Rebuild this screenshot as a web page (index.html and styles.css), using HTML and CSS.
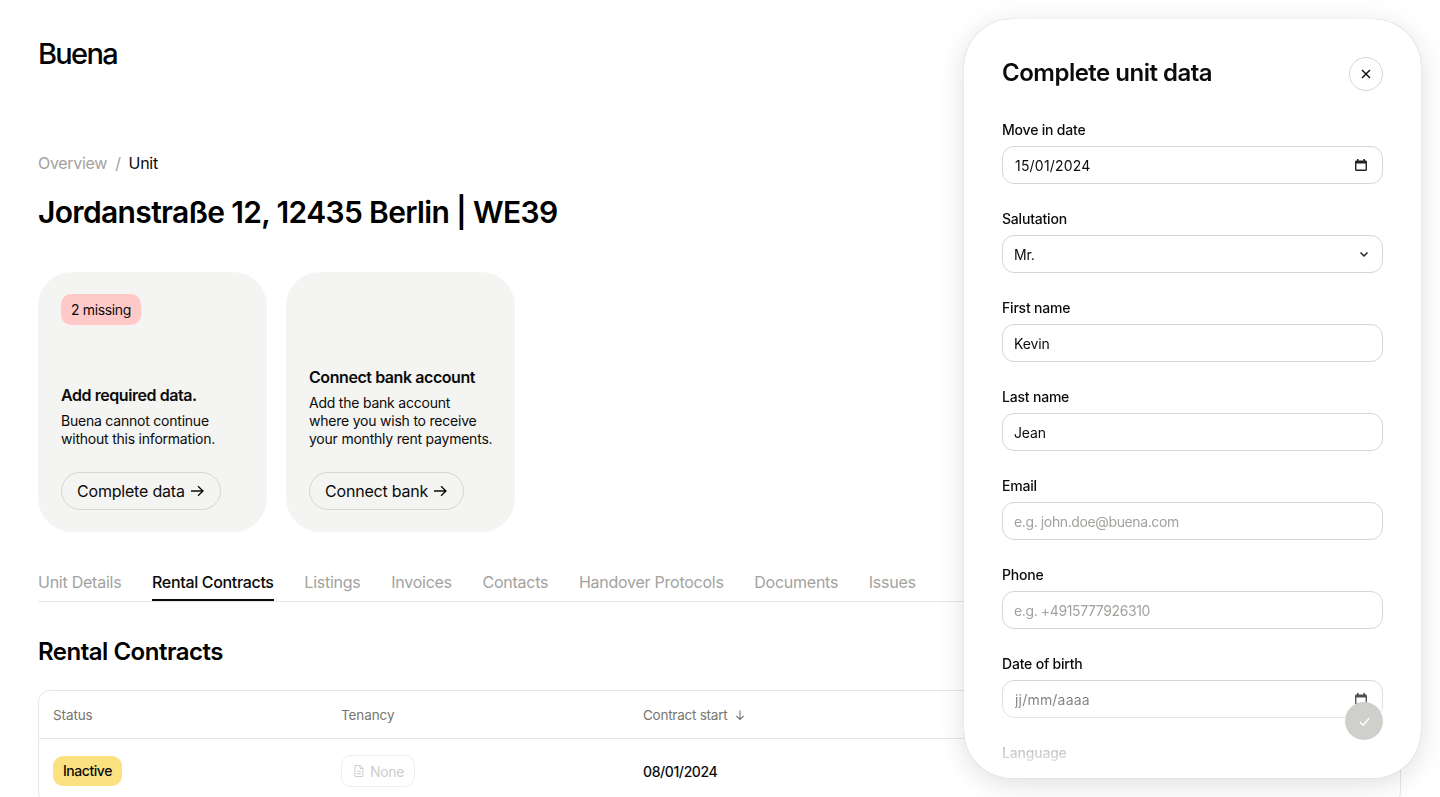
FILE: index.html
```html
<!DOCTYPE html>
<html lang="en">
<head>
    <meta charset="UTF-8">
    <meta name="viewport" content="width=device-width, initial-scale=1.0">
    <title>Buena - Unit</title>
    <link rel="stylesheet" href="styles.css">
</head>
<body>
    <main class="page">
        <div class="logo">Buena</div>

        <nav class="breadcrumb">
            <span class="crumb-link">Overview</span>
            <span class="crumb-sep">/</span>
            <span class="crumb-current">Unit</span>
        </nav>

        <h1 class="page-title">Jordanstraße 12, 12435 Berlin | WE39</h1>

        <section class="cards">
            <article class="card">
                <span class="badge-missing">2 missing</span>
                <h3 class="card-title">Add required data.</h3>
                <p class="card-text">Buena cannot continue<br>without this information.</p>
                <button class="pill-button">Complete data
                    <svg class="arrow" viewBox="0 0 16 16"><path d="M2 8h12M9 3.200 14 8l-5 4.800"/></svg>
                </button>
            </article>
            <article class="card">
                <h3 class="card-title">Connect bank account</h3>
                <p class="card-text">Add the bank account<br>where you wish to receive<br>your monthly rent payments.</p>
                <button class="pill-button">Connect bank
                    <svg class="arrow" viewBox="0 0 16 16"><path d="M2 8h12M9 3.200 14 8l-5 4.800"/></svg>
                </button>
            </article>
        </section>

        <nav class="tabs">
            <a class="tab">Unit Details</a>
            <a class="tab active">Rental Contracts</a>
            <a class="tab">Listings</a>
            <a class="tab">Invoices</a>
            <a class="tab">Contacts</a>
            <a class="tab">Handover Protocols</a>
            <a class="tab">Documents</a>
            <a class="tab">Issues</a>
        </nav>

        <h2 class="section-title">Rental Contracts</h2>

        <div class="table">
            <div class="table-row table-head">
                <div>Status</div>
                <div>Tenancy</div>
                <div class="sort-cell">Contract start
                    <svg class="sort-arrow" viewBox="0 0 12 12"><path d="M6 1.500v9M2.400 7 6 10.500 9.600 7"/></svg>
                </div>
            </div>
            <div class="table-row">
                <div><span class="badge-inactive">Inactive</span></div>
                <div>
                    <span class="chip-none">
                        <svg class="doc-icon" viewBox="0 0 14 14"><path d="M3 1.500h5.200L11 4.300v8.200H3zM8 1.500v3h3M5 7.200h4M5 9.600h4"/></svg>
                        None
                    </span>
                </div>
                <div class="date-cell">08/01/2024</div>
            </div>
        </div>
    </main>

    <aside class="modal">
        <div class="modal-header">
            <h2 class="modal-title">Complete unit data</h2>
            <button class="close-button">
                <svg viewBox="0 0 12 12"><path d="M2 2l8 8M10 2l-8 8"/></svg>
            </button>
        </div>

        <form class="form">
            <label class="field">
                <span class="field-label">Move in date</span>
                <span class="input-wrap">
                    <input class="input input-date" type="text" value="15/01/2024" readonly>
                    <svg class="field-icon" viewBox="0 0 14 14"><path class="cal-fill" d="M3 1h1.600v1.400h4.800V1H11v1.400h.6c.8 0 1.400.6 1.400 1.400v7.800c0 .8-.6 1.400-1.400 1.400H2.400c-.8 0-1.400-.6-1.400-1.400V3.800c0-.8.6-1.400 1.400-1.400H3zM2.400 5.400v6.200h9.200V5.400z"/></svg>
                </span>
            </label>
            <label class="field">
                <span class="field-label">Salutation</span>
                <span class="input-wrap">
                    <input class="input" type="text" value="Mr." readonly>
                    <svg class="field-chevron" viewBox="0 0 10 10"><path d="M1.500 3.500 5 7l3.500-3.500"/></svg>
                </span>
            </label>
            <label class="field">
                <span class="field-label">First name</span>
                <input class="input" type="text" value="Kevin">
            </label>
            <label class="field">
                <span class="field-label">Last name</span>
                <input class="input" type="text" value="Jean">
            </label>
            <label class="field">
                <span class="field-label">Email</span>
                <input class="input" type="text" placeholder="e.g. john.doe@buena.com">
            </label>
            <label class="field">
                <span class="field-label">Phone</span>
                <input class="input" type="text" placeholder="e.g. +4915777926310">
            </label>
            <label class="field">
                <span class="field-label">Date of birth</span>
                <span class="input-wrap">
                    <input class="input input-date input-empty" type="text" value="jj/mm/aaaa" readonly>
                    <svg class="field-icon" viewBox="0 0 14 14"><path class="cal-fill" d="M3 1h1.600v1.400h4.800V1H11v1.400h.6c.8 0 1.400.6 1.400 1.400v7.800c0 .8-.6 1.400-1.400 1.400H2.400c-.8 0-1.400-.6-1.400-1.400V3.800c0-.8.6-1.400 1.400-1.400H3zM2.400 5.400v6.200h9.200V5.400z"/></svg>
                </span>
            </label>
            <label class="field">
                <span class="field-label">Language</span>
                <input class="input" type="text" readonly>
            </label>
        </form>

        <div class="modal-fade"></div>

        <button class="submit-button">
            <svg viewBox="0 0 14 14"><path d="M2 7.500 5.500 11 12 3.500"/></svg>
        </button>
    </aside>
</body>
</html>
```

FILE: styles.css
```css
* {
    margin: 0;
    padding: 0;
    box-sizing: border-box;
}

html,
body {
    height: 100%;
    overflow: hidden;
}

body {
    font-family: Inter, 'Liberation Sans', sans-serif;
    background: #fff;
    color: #0b0b0b;
}

.page {
    padding: 33px 39px 0 38px;
}

.logo {
    font-size: 29px;
    line-height: 42px;
    font-weight: 500;
    letter-spacing: -1.7px;
    color: #000;
}

.breadcrumb {
    display: flex;
    gap: 8px;
    margin-top: 76px;
    font-size: 16px;
    line-height: 24px;
    letter-spacing: -0.3px;
}

.crumb-link,
.crumb-sep {
    color: #a3a29e;
}

.page-title {
    margin-top: 14px;
    font-size: 30px;
    line-height: 46px;
    font-weight: 600;
    letter-spacing: -0.65px;
    color: #000;
}

.cards {
    display: flex;
    gap: 19px;
    margin-top: 37px;
}

.card {
    position: relative;
    display: flex;
    flex-direction: column;
    justify-content: flex-end;
    width: 229px;
    height: 260px;
    padding: 23px 20px 22px 23px;
    background: #f4f4f2;
    border-radius: 34px;
}

.badge-missing {
    position: absolute;
    top: 22px;
    left: 23px;
    padding: 0 10px;
    height: 31px;
    line-height: 31px;
    font-size: 14px;
    letter-spacing: -0.35px;
    background: #ffc9c7;
    border-radius: 10px;
}

.card-title {
    font-size: 16px;
    line-height: 24px;
    font-weight: 600;
    letter-spacing: -0.43px;
}

.card-text {
    margin-top: 5px;
    font-size: 14px;
    line-height: 18px;
    letter-spacing: -0.22px;
}

.pill-button {
    display: inline-flex;
    align-items: center;
    align-self: flex-start;
    gap: 4px;
    height: 38px;
    margin-top: 24px;
    padding: 0 15px;
    font-family: inherit;
    font-size: 16px;
    letter-spacing: -0.2px;
    color: #0b0b0b;
    background: transparent;
    border: 1px solid #d6d5d2;
    border-radius: 19px;
}

.arrow {
    width: 16px;
    height: 16px;
    fill: none;
    stroke: #0b0b0b;
    stroke-width: 1.3;
}

.tabs {
    display: flex;
    gap: 30.7px;
    margin-top: 37px;
    border-bottom: 1px solid #e6e6e4;
}

.tab {
    height: 32px;
    padding-top: 1px;
    font-size: 16px;
    line-height: 24px;
    letter-spacing: -0.25px;
    color: #a3a29e;
}

.tab.active {
    color: #0b0b0b;
    font-weight: 500;
    letter-spacing: -0.33px;
    border-bottom: 2px solid #0b0b0b;
    margin-bottom: -1px;
}

.section-title {
    margin-top: 32px;
    font-size: 24px;
    line-height: 36px;
    font-weight: 600;
    letter-spacing: -0.5px;
    color: #000;
}

.table {
    margin-top: 20px;
    border: 1px solid #e6e6e4;
    border-radius: 12px;
}

.table-row {
    display: grid;
    grid-template-columns: 288px 302px 1fr;
    align-items: center;
    height: 64px;
    padding: 0 14px;
    font-size: 14px;
}

.table-head {
    height: 48px;
    color: #77766f;
    font-size: 13.5px;
    letter-spacing: -0.1px;
    border-bottom: 1px solid #e6e6e4;
}

.sort-cell {
    display: flex;
    align-items: center;
    gap: 7px;
    letter-spacing: -0.25px;
}

.sort-arrow {
    width: 12px;
    height: 12px;
    fill: none;
    stroke: #77766f;
    stroke-width: 1.1;
}

.badge-inactive {
    display: inline-block;
    height: 30px;
    padding: 0 10px;
    line-height: 30px;
    font-size: 14px;
    font-weight: 500;
    letter-spacing: -0.45px;
    background: #fce181;
    border-radius: 10px;
}

.chip-none {
    display: inline-flex;
    align-items: center;
    gap: 4px;
    height: 32px;
    padding: 0 10px;
    color: #cfcecb;
    letter-spacing: -0.3px;
    border: 1px solid #eeeeec;
    border-radius: 10px;
}

.doc-icon {
    width: 14px;
    height: 14px;
    fill: none;
    stroke: #cfcecb;
    stroke-width: 1;
}

.date-cell {
    font-weight: 500;
    letter-spacing: -0.4px;
}

/* side panel sits over the page */
.modal {
    position: fixed;
    top: 19px;
    left: 964px;
    width: 457px;
    height: 759px;
    padding: 36px 38px 0;
    overflow: hidden;
    background: #fff;
    border-radius: 48px;
    box-shadow: 0 0 1px rgba(0, 0, 0, 0.3), 0 6px 28px rgba(0, 0, 0, 0.13);
}

.modal-header {
    display: flex;
    justify-content: space-between;
    align-items: center;
    height: 36px;
    margin-bottom: 30px;
}

.modal-title {
    font-size: 24px;
    line-height: 32px;
    font-weight: 600;
    letter-spacing: -0.5px;
    color: #0b0b0b;
}

.close-button {
    display: flex;
    align-items: center;
    justify-content: center;
    width: 34px;
    height: 34px;
    margin-top: 2px;
    background: #fff;
    border: 1px solid #d6d5d2;
    border-radius: 50%;
}

.close-button svg {
    width: 12px;
    height: 12px;
    fill: none;
    stroke: #0b0b0b;
    stroke-width: 1.4;
}

.form {
    display: flex;
    flex-direction: column;
    gap: 26px;
}

.field {
    display: flex;
    flex-direction: column;
    gap: 8px;
}

.field-label {
    font-size: 14px;
    line-height: 17px;
    font-weight: 500;
    letter-spacing: -0.2px;
}

.input-wrap {
    position: relative;
    display: block;
}

.input {
    display: block;
    width: 100%;
    height: 38px;
    padding: 0 11px;
    font-family: inherit;
    font-size: 14px;
    letter-spacing: -0.15px;
    color: #0b0b0b;
    background: #fff;
    border: 1px solid #d6d5d2;
    border-radius: 12px;
    outline: none;
}

.input::placeholder {
    color: #a3a29e;
    letter-spacing: -0.38px;
}

.input-date {
    padding-left: 12px;
    letter-spacing: 0.2px;
}

.input-empty {
    color: #5c5b57;
}

.field-icon {
    position: absolute;
    top: 12px;
    right: 15px;
    width: 14px;
    height: 14px;
}

.cal-fill {
    fill: #222;
    fill-rule: evenodd;
}

.field-chevron {
    position: absolute;
    top: 14px;
    right: 14px;
    width: 10px;
    height: 10px;
    fill: none;
    stroke: #222;
    stroke-width: 1.5;
}

.modal-fade {
    position: absolute;
    left: 0;
    right: 0;
    bottom: 0;
    height: 103px;
    background: linear-gradient(to bottom, rgba(255, 255, 255, 0), rgba(255, 255, 255, 0.78) 76%, #fff 95%);
}

.submit-button {
    position: absolute;
    right: 38px;
    bottom: 38px;
    display: flex;
    align-items: center;
    justify-content: center;
    width: 38px;
    height: 38px;
    background: #cfcfcc;
    border: none;
    border-radius: 50%;
}

.submit-button svg {
    width: 13px;
    height: 13px;
    fill: none;
    stroke: #fff;
    stroke-width: 1.4;
}
```
